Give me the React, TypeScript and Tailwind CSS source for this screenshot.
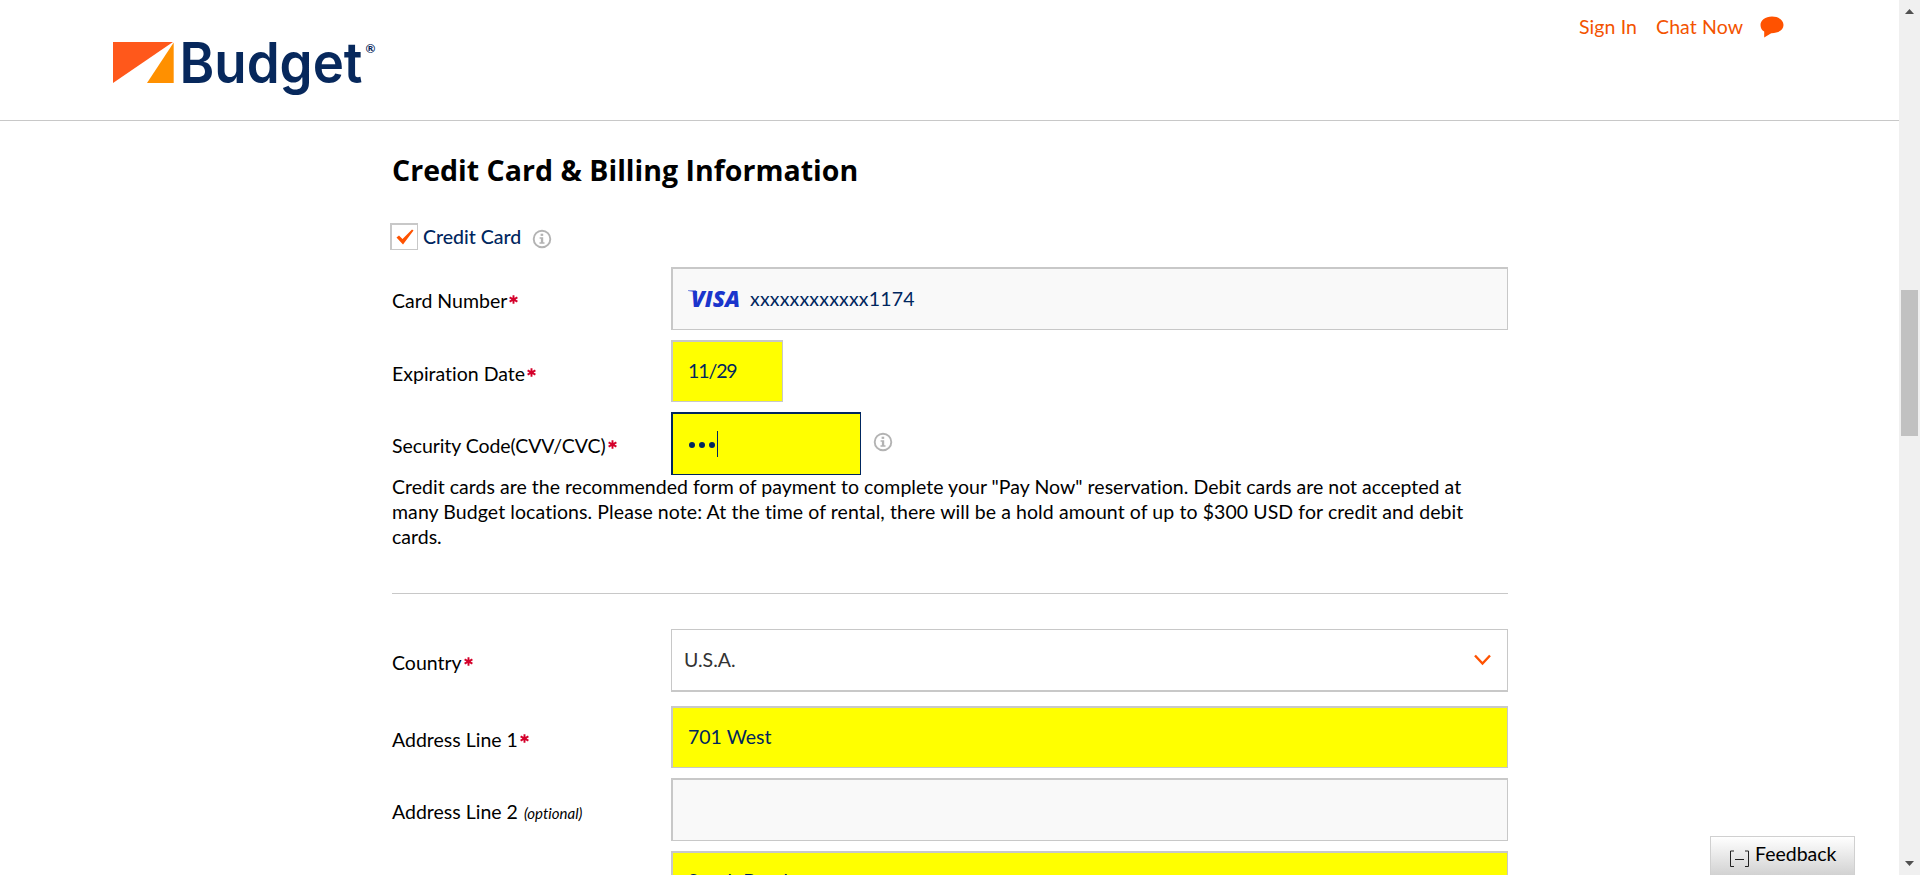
import React from "react";

function Info({ className = "" }: { className?: string }) {
  return (
    <svg width="20" height="20" viewBox="0 0 20 20" className={className}>
      <circle cx="10" cy="10" r="8.3" fill="none" stroke="#b3b3b3" strokeWidth="1.9" />
      <rect x="8.6" y="4.7" width="2.6" height="2.2" fill="#b3b3b3" />
      <path d="M7.6 8.2h3.6v5h1.3v1.6H7.5v-1.6h1.4V9.8H7.6z" fill="#b3b3b3" />
    </svg>
  );
}

function Star() {
  return (
    <svg width="9" height="9" viewBox="0 0 9 9" className="mb-[4px] ml-[2px] inline-block align-baseline">
      <path d="M4.5 0.3v8.4M0.6 2.4l7.8 4.2M8.4 2.4L0.6 6.6" stroke="#d4002a" strokeWidth="1.9" />
    </svg>
  );
}

function Logo() {
  return (
    <svg width="270" height="75" viewBox="110 30 270 75" className="overflow-visible">
      <path d="M113 42H173L113 83z" fill="#ff581b" />
      <path d="M173.7 42.5V83H147z" fill="#ff9000" />
      <text x="179.5" y="83" fontFamily="Inter" fontWeight="600" fontSize="56" textLength="183" lengthAdjust="spacingAndGlyphs" fill="#07285c">
        Budget
      </text>
      <text x="365.5" y="52.5" fontFamily="Lato" fontWeight="700" fontSize="12" fill="#07285c">
        ®
      </text>
    </svg>
  );
}

type RowProps = {
  label: React.ReactNode;
  required?: boolean;
  note?: string;
  className?: string;
  children?: React.ReactNode;
};

function Row({ label, required = true, note, className = "", children }: RowProps) {
  return (
    <div className={"flex " + className}>
      <div className="w-[279px] shrink-0 pt-[21px] text-[19.5px] leading-[26px] whitespace-nowrap text-black">
        {label}
        {required && <Star />}
        {note && <span className="ml-[6px] text-[15px] italic">{note}</span>}
      </div>
      {children}
    </div>
  );
}

const field = "flex items-center border-t-2 border-l-2 border-r border-b pl-[15px] text-[19.5px] leading-[24px] text-[#00265e] ";

export default function App() {
  return (
    <div className="flex h-[875px] w-[1920px] overflow-hidden bg-white font-[Lato,'Noto_Sans',sans-serif] [font-variant-ligatures:none]">
      <div className="relative h-[875px] w-[1899px] overflow-hidden">
        <header className="flex h-[121px] justify-between border-b border-[#c8c8c8] pl-[110px]">
          <div className="pt-[30px]">
            <Logo />
          </div>
          <div className="flex h-[53px] items-center pr-[115px] text-[19.5px] text-[#f35300]">
            <a className="w-[77px] tracking-[0.1px]">Sign In</a>
            <a className="w-[104px] tracking-[0.1px]">Chat Now</a>
            <svg width="24" height="22" viewBox="0 0 24 22">
              <path d="M12 0.5C5.3 0.5 0.5 4.2 0.5 9c0 3 1.4 5.2 3.7 6.600V21.5l7-4.3C18.5 17.3 23.5 13.8 23.5 9S18.7 0.5 12 0.5z" fill="#ff5200" />
            </svg>
          </div>
        </header>
        <main className="ml-[392px] w-[1116px]">
          <h1 className="pt-[31px] font-['Open_Sans',sans-serif] text-[28.5px] leading-[36px] font-bold tracking-[0.02px] whitespace-nowrap text-black">Credit Card &amp; Billing Information</h1>
          <div className="mt-[35px] -ml-[2px] flex h-[27px]">
            <div className="flex w-[28px] items-center justify-center border-t-2 border-l-2 border-r border-b border-[#c8c8c8]">
              <svg width="18" height="16" viewBox="0 0 18 16">
                <path d="M0.5 8.5L3 6.5L6.5 10L16 0.5L17.5 1.5L7 15.5z" fill="#ff5200" />
              </svg>
            </div>
            <span className="ml-[5px] w-[109px] text-[19.5px] leading-[27px] font-medium text-[#00265e]">Credit Card</span>
            <Info className="mt-[6px]" />
          </div>
          <Row label="Card Number" className="mt-[17px] h-[63px]">
            <div className={field + "w-[837px] border-[#c8c8c8] bg-[#f9f9f9]"}>
              <svg width="52" height="18" viewBox="0 0 52 18" className="mr-[10px] overflow-visible">
                <text x="3" y="17" fontFamily="Open Sans" fontWeight="800" fontStyle="italic" fontSize="23" textLength="49" lengthAdjust="spacingAndGlyphs" fill="#1a35cc">VISA</text>
                <path d="M0 0.5H8L9 3C6 1.5 3 1.2 0 1z" fill="#1a35cc" />
              </svg>
              <span className="tracking-[0.18px]">xxxxxxxxxxxx1174</span>
            </div>
          </Row>
          <Row label="Expiration Date" className="mt-[10px] h-[62px]">
            <div className={field + "w-[112px] border-[#c8c8c8] bg-[#ffff00] pb-[2px] tracking-[-1.1px]"}>11/29</div>
          </Row>
          <Row label={<span className="tracking-[-0.07px]">Security Code(CVV/CVC)</span>} className="mt-[10px] h-[63px]">
            <div className={field + "w-[190px] border-[#00265e] bg-[#ffff00]"}>
              <div className="ml-px flex items-center gap-[4px] pt-[2px]">
                <i className="size-[6px] rounded-full bg-[#00265e]" />
                <i className="size-[6px] rounded-full bg-[#00265e]" />
                <i className="size-[6px] rounded-full bg-[#00265e]" />
              </div>
              <i className="ml-[2px] h-[26px] w-px bg-[#00265e]" />
            </div>
            <Info className="mt-[20px] ml-[12px]" />
          </Row>
          <p className="-mt-px text-[19.5px] leading-[25px] whitespace-nowrap text-black">
            <span className="block tracking-[0.03px]">Credit cards are the recommended form of payment to complete your "Pay Now" reservation. Debit cards are not accepted at</span>
            <span className="block tracking-[0.08px]">many Budget locations. Please note: At the time of rental, there will be a hold amount of up to $300 USD for credit and debit</span>
            <span className="block">cards.</span>
          </p>
          <div className="mt-[44px] h-px bg-[#c8c8c8]" />
          <Row label="Country" className="mt-[35px] h-[63px]">
            <div className="flex w-[837px] items-center justify-between border border-b-2 border-[#c8c8c8] pr-[16px] pl-[12px] text-[19.5px] text-[#333333]">
              <span>U.S.A.</span>
              <svg width="17" height="12" viewBox="0 0 17 12">
                <path d="M1 1.5L8.5 9.5L16 1.5" fill="none" stroke="#ff5200" strokeWidth="2.4" />
              </svg>
            </div>
          </Row>
          <Row label="Address Line 1" className="mt-[14px] h-[62px]">
            <div className={field + "w-[837px] border-[#c8c8c8] bg-[#ffff00] pb-[2px]"}>701 West</div>
          </Row>
          <Row label="Address Line 2" required={false} note="(optional)" className="mt-[10px] h-[63px]">
            <div className={field + "w-[837px] border-[#c8c8c8] bg-[#f9f9f9]"} />
          </Row>
          <Row label="" required={false} className="mt-[10px] h-[63px]">
            <div className={field + "w-[837px] border-[#c8c8c8] bg-[#ffff00] pb-[4px]"}>South Bend</div>
          </Row>
        </main>
        <div className="absolute top-[836px] left-[1710px] flex h-[40px] w-[145px] border border-[#d0d0d0] bg-linear-to-b from-white to-[#d2d2d2] pl-[18px] text-black">
          <svg width="21" height="18" viewBox="0 0 21 18" className="mt-[13px] mr-[5px]">
            <path d="M5 1H1.5V16.5H5M16 1H19.5V16.5H16M6 9.5H15" fill="none" stroke="#222222" strokeWidth="1" />
          </svg>
          <span className="pt-[4px] text-[19.5px] leading-[26px]">Feedback</span>
        </div>
      </div>
      <div className="flex h-[875px] w-[21px] flex-col items-center bg-[#f0f0f0]">
        <svg width="9" height="5" viewBox="0 0 9 5" className="mt-[9px]"><path d="M0 5L4.5 0L9 5z" fill="#505050" /></svg>
        <div className="mt-[276px] h-[146px] w-[17px] bg-[#c1c1c1]" />
        <svg width="9" height="5" viewBox="0 0 9 5" className="mt-[425px]"><path d="M0 0L4.5 5L9 0z" fill="#505050" /></svg>
      </div>
    </div>
  );
}
